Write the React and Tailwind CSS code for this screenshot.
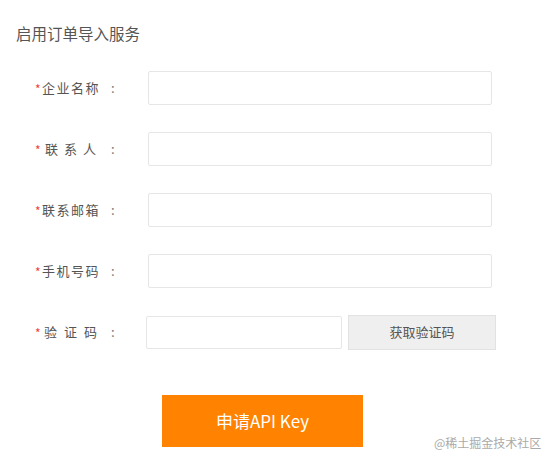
const font = { fontFamily: '"Noto Sans CJK SC", "Liberation Sans", sans-serif' }

function Label({ text, wide }) {
  return (
    <div className="w-[148px] shrink-0 flex items-center whitespace-nowrap text-[13px] text-[#555] pl-[35px]">
      <span className="text-[#f04040] text-[12px] w-[7px] leading-none mt-[2px]">*</span>
      <span className={wide ? 'ml-[3px] tracking-[6px]' : 'tracking-[1.5px]'}>{text}</span>
      <span className="ml-auto w-[37px] text-[#777]">:</span>
    </div>
  )
}

const fields = [
  { text: '企业名称' },
  { text: '联系人', wide: true },
  { text: '联系邮箱' },
  { text: '手机号码' },
]

export default function App() {
  return (
    <div className="w-[551px] h-[464px] bg-white relative" style={font}>
      <div className="pl-[16px] pt-[23px] text-[15.5px] text-[#555] leading-[20px]">启用订单导入服务</div>
      <div className="mt-[28px] flex flex-col gap-[27px]">
        {fields.map((f) => (
          <div key={f.text} className="flex items-center h-[34px]">
            <Label text={f.text} wide={f.wide} />
            <div className="w-[344px] h-[34px] border border-[#e6e6e6] rounded-[2px] bg-white" />
          </div>
        ))}
        <div className="flex items-center h-[34px]">
          <div className="w-[146px] shrink-0 flex items-center whitespace-nowrap text-[13px] text-[#555] pl-[35px]">
            <span className="text-[#f04040] text-[12px] w-[7px] leading-none mt-[2px]">*</span>
            <span className="ml-[2px] tracking-[7px]">验证码</span>
            <span className="ml-auto w-[35px] text-[#777]">:</span>
          </div>
          <div className="w-[196px] h-[33px] border border-[#e6e6e6] rounded-[2px] bg-white" />
          <div className="ml-[6px] w-[148px] h-[35px] bg-[#efefef] border border-[#e2e2e2] flex items-center justify-center text-[13px] text-[#555]">
            获取验证码
          </div>
        </div>
      </div>
      <div className="mt-[46px] ml-[162px] w-[201px] h-[52px] bg-[#ff8200] flex items-center justify-center text-white text-[17px]">
        申请API Key
      </div>
      <div className="absolute left-[434px] top-[434px] text-[12px] text-[#aaa]">@稀土掘金技术社区</div>
    </div>
  )
}
